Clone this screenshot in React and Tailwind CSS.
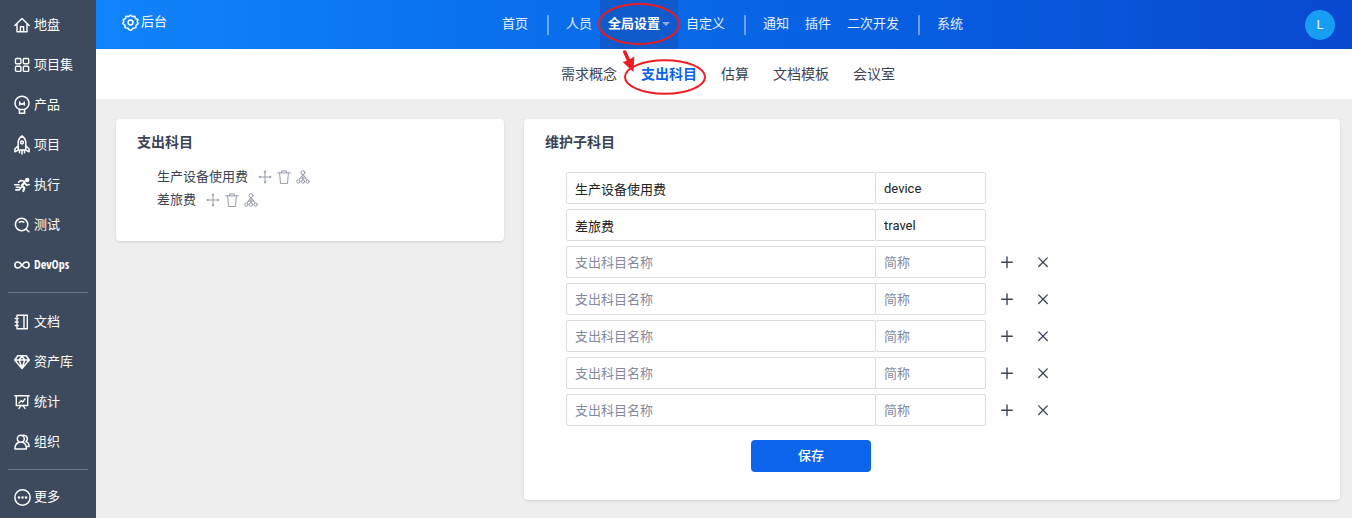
import React from "react";

const stroke = {
  fill: "none",
  stroke: "currentColor",
  strokeLinecap: "round",
  strokeLinejoin: "round",
};

function Glyph({ children, className = "size-4", width = 1.5, box = "0 0 16 16" }) {
  return (
    <svg
      viewBox={box}
      className={`shrink-0 ${className}`}
      strokeWidth={width}
      aria-hidden="true"
      {...stroke}
    >
      {children}
    </svg>
  );
}

const icons = {
  home: (
    <Glyph width={1.4}>
      <path d="M.8 8.400 8 1.600l7.200 6.800M3 7v7.700h10V7M6.400 14.500V9.800h3.200v4.700" />
    </Glyph>
  ),
  grid: (
    <Glyph width={1.4}>
      <rect x="1.500" y="1.500" width="5.400" height="5.200" rx="1" />
      <rect x="9.300" y="1.500" width="5.400" height="5.200" rx="1" />
      <rect x="1.500" y="9.200" width="5.400" height="5.200" rx="1" />
      <rect x="9.300" y="9.200" width="5.400" height="5.200" rx="1" />
    </Glyph>
  ),
  bulb: (
    <Glyph className="h-5 w-4" box="0 0 16 20">
      <path d="M5.400 14.400C2.700 13.200 1 11 1 8a7 6.800 0 0 1 14 0c0 3-1.700 5.200-4.400 6.400Z" />
      <path d="M5.400 14.400v3.800h5.200v-3.800M5.700 7v3M10.300 7v3M5.700 8.300l2.300 1 2.300-1" />
    </Glyph>
  ),
  rocket: (
    <Glyph className="h-5 w-4" box="0 0 16 20">
      <path d="M4.200 15V8C4.200 5 5.700 2.400 8 1c2.300 1.400 3.800 4 3.800 7v7ZM4.200 10.700.9 14v2.800l3.300-1.600M11.800 10.700l3.300 3.300v2.800l-3.300-1.600M5.500 16v1.700M8 16v3M10.500 16v1.700" />
      <circle cx="8" cy="7.500" r="1.400" />
    </Glyph>
  ),
  run: (
    <Glyph width={1.6}>
      <circle cx="13.200" cy="3" r="1.400" fill="currentColor" />
      <path d="M10.500 5.500 7.800 8.800l2.500 2-1 3.200" strokeWidth="2.200" />
      <path d="M10.800 4.300 6.800 3.500 4.600 5.200M11.400 6.700l1.300 1.600 2.500-.8M7 10.600 5 12.900H1.800M.8 7.800h4.300M2.300 10.300h3" />
    </Glyph>
  ),
  search: (
    <Glyph>
      <circle cx="7.600" cy="7.500" r="6.200" />
      <path d="m12.200 12.200 2.700 2.500M5.400 5.200q2.200-1.600 4.400 0" />
    </Glyph>
  ),
  loop: (
    <Glyph width={1.6}>
      <path d="M8 8C6.600 6.200 5.600 5 3.900 5a3 3 0 0 0 0 6C5.600 11 6.600 9.800 8 8s2.400-3 4.100-3a3 3 0 0 1 0 6C10.400 11 9.400 9.800 8 8Z" />
    </Glyph>
  ),
  notebook: (
    <Glyph width={1.4}>
      <path d="M3 1.200h10.300v13.600H3ZM10 1.200v13.600M1.200 4.500h3M1.200 8h3M1.200 11.500h3" />
    </Glyph>
  ),
  diamond: (
    <Glyph>
      <path d="M3.800 1.800h8.400L15.300 6 8 14.500.7 6ZM.9 6h14.200M5.200 6 8 14M10.800 6 8 14M5.200 6 8 2.200 10.800 6" />
    </Glyph>
  ),
  board: (
    <Glyph width={1.4}>
      <path d="M.8 1.800h14.400M2.300 2v9.500h11.400V2M5 14.400l2-2.700M11 14.400l-2-2.700M5 9l2.300-2.300 1.500 1.200L11 4.800" />
    </Glyph>
  ),
  people: (
    <Glyph>
      <circle cx="6.800" cy="4.700" r="3.500" />
      <path d="M.9 14.900c0-3.500 1.700-5.700 4-6.600M8.700 8.300c2.300.900 3.700 3.300 3.700 6.600H.9M9.400 1.200a3.500 3.500 0 0 1 2.500 6.300c2 .8 3.200 2.600 3.200 5h-2" />
    </Glyph>
  ),
  more: (
    <Glyph className="size-[17px]" width={1.4}>
      <circle cx="8" cy="8" r="7.200" />
      <g fill="currentColor" stroke="none">
        <circle cx="4.700" cy="8" r="1.200" />
        <circle cx="8" cy="8" r="1.200" />
        <circle cx="11.300" cy="8" r="1.200" />
      </g>
    </Glyph>
  ),
};

const gear = (
  <Glyph className="size-[17px]" width={1.4}>
    <path d="M8 .9 9.600 2.300 12.100 2.100 12.700 4.200 15 5.300 14.300 7.200 15.200 9.100 13.200 10.600 13 13 10.600 13.300 8.900 15.100 7.100 15.100 5.400 13.300 3 13 2.800 10.600.8 9.100 1.700 7.200 1 5.300 3.300 4.200 3.900 2.100 6.400 2.300Z" />
    <circle cx="8" cy="8" r="2.300" />
  </Glyph>
);

const sideGroups = [
  {
    className: "mx-2",
    items: [
      ["home", "地盘"],
      ["grid", "项目集"],
      ["bulb", "产品"],
      ["rocket", "项目"],
      ["run", "执行"],
      ["search", "测试"],
      ["loop", "DevOps"],
    ],
  },
  {
    className: "mx-2 mt-[7px] border-t border-[#6b7585] pt-[9px]",
    items: [
      ["notebook", "文档"],
      ["diamond", "资产库"],
      ["board", "统计"],
      ["people", "组织"],
    ],
  },
  {
    className: "mx-2 mt-[7px] border-t border-[#6b7585] pt-[7px]",
    items: [["more", "更多"]],
  },
];

function Sidebar() {
  return (
    <nav className="w-24 shrink-0 bg-[#3d4a5d] pt-[5px] text-white">
      {sideGroups.map(({ className, items }, i) => (
        <ul key={i} className={className}>
          {items.map(([icon, label]) => (
            <li key={label}>
              <a href="#" className="flex h-10 items-center gap-1 pl-[6px]">
                <span className="flex w-4 shrink-0 justify-center">{icons[icon]}</span>
                {label === "DevOps" ? (
                  <span className="font-['Liberation_Sans_Narrow','Open_Sans_Condensed','Roboto_Condensed',sans-serif] text-xs font-bold">
                    {label}
                  </span>
                ) : (
                  label
                )}
              </a>
            </li>
          ))}
        </ul>
      ))}
    </nav>
  );
}

const mainMenu = [["首页"], ["人员", "全局设置", "自定义"], ["通知", "插件", "二次开发"], ["系统"]];

function Header() {
  return (
    <header className="grid h-[49px] grid-cols-[1fr_auto_1fr] items-center bg-linear-to-r from-[#1183fb] to-[#0a48d1] pr-[17px] pl-[26px] text-white">
      <a href="#" className="flex h-11 items-center gap-0.5 self-start">
        {gear}
        <span>后台</span>
      </a>
      <nav className="flex h-full items-center pl-2">
        {mainMenu.map((group, i) => (
          <React.Fragment key={i}>
            {i > 0 && <span className="mr-[9px] ml-[11px] h-5 w-0.5 bg-white/40" />}
            {group.map((label) =>
              label === "全局设置" ? (
                <a
                  key={label}
                  href="#"
                  className="relative flex h-full items-center gap-0.5 bg-[#0f5bcb] px-2 pb-0.5 font-bold"
                >
                  {label}
                  <svg viewBox="0 0 8 4" className="h-1 w-2 fill-white/50" aria-hidden="true">
                    <path d="M0 0h8L4 4z" />
                  </svg>
                  <svg
                    viewBox="0 0 82 42"
                    className="absolute top-[3px] -left-0.5 z-10 h-[42px] w-[82px]"
                    aria-hidden="true"
                  >
                    <ellipse cx="41" cy="21" rx="40" ry="20" fill="none" stroke="#ec1c24" strokeWidth="2" />
                  </svg>
                </a>
              ) : (
                <a key={label} href="#" className="flex h-full items-center px-2 pb-0.5 text-white/90">
                  {label}
                </a>
              ),
            )}
          </React.Fragment>
        ))}
      </nav>
      <button
        type="button"
        className="flex size-[30px] items-center justify-center justify-self-end rounded-full bg-[#189df5] text-white/90"
      >
        L
      </button>
    </header>
  );
}

function SubMenu() {
  return (
    <nav className="flex h-[50px] items-center justify-center gap-6 bg-white pl-2 text-sm">
      {["需求概念", "支出科目", "估算", "文档模板", "会议室"].map((label) =>
        label === "支出科目" ? (
          <a key={label} href="#" className="relative font-bold text-[#0c64eb]">
            {label}
            <svg
              viewBox="0 0 82 46"
              className="absolute -top-[15px] -left-[17px] z-10 h-[46px] w-[82px] overflow-visible"
              aria-hidden="true"
            >
              <ellipse cx="41" cy="28" rx="40" ry="16.700" fill="none" stroke="#ec1c24" strokeWidth="2" />
              <path
                d="M-1.300 2.500Q.2.500 2.300 2L6 10.300 10.300 7.500 9.500 23-1.300 13 2.800 11.800Z"
                fill="#ec1c24"
              />
            </svg>
          </a>
        ) : (
          <a key={label} href="#">
            {label}
          </a>
        ),
      )}
    </nav>
  );
}

function IconButton({ label, children }) {
  return (
    <button type="button" aria-label={label} className="flex h-4 w-[19px] items-center justify-center">
      <Glyph className="size-3.5" width={1.1}>
        {children}
      </Glyph>
    </button>
  );
}

function SubjectTree() {
  return (
    <section className="rounded bg-white px-[21px] pt-[13px] pb-[30px] shadow-sm">
      <h2 className="text-sm font-bold">支出科目</h2>
      <ul className="mt-[13px] pl-5">
        {["生产设备使用费", "差旅费"].map((name) => (
          <li key={name} className="flex h-[23px] items-center">
            <span className="mr-[7px]">{name}</span>
            <span className="flex text-[#9297a5]">
              <IconButton label="移动">
                <path d="M8 2v12M2 8h12" />
                <path
                  d="m8 .3 1.800 2.500H6.200zM8 15.700l1.800-2.500H6.200zM.3 8l2.500-1.800v3.600zM15.700 8l-2.500-1.800v3.600z"
                  fill="currentColor"
                  stroke="none"
                />
              </IconButton>
              <IconButton label="删除">
                <path d="M.9 3.300h14.200M5.300 3V1h5.400v2M3 3.500l1 12h8l1-12" />
              </IconButton>
              <IconButton label="子类">
                <circle cx="8" cy="3" r="2.200" />
                <circle cx="2.700" cy="13.200" r="1.900" />
                <circle cx="8" cy="13.200" r="1.900" />
                <circle cx="13.300" cy="13.200" r="1.900" />
                <path d="M8 5.200v6M7.200 6 3.700 11M8.800 6l3.500 5M5 9.200h6" />
              </IconButton>
            </span>
          </li>
        ))}
      </ul>
    </section>
  );
}

const rows = [["生产设备使用费", "device"], ["差旅费", "travel"], [], [], [], [], []];

function SubjectForm() {
  return (
    <section className="rounded bg-white px-[21px] pt-[13px] pb-7 shadow-sm">
      <h2 className="text-sm font-bold">维护子科目</h2>
      <form className="mt-5 ml-[21px] max-w-[490px]" onSubmit={(e) => e.preventDefault()}>
        <div className="flex flex-col gap-[5px]">
          {rows.map(([name = "", code = ""], i) => (
            <div key={i} className="flex items-center">
              <input
                aria-label="支出科目名称"
                placeholder="支出科目名称"
                defaultValue={name}
                className="h-8 w-[310px] shrink-0 rounded-xs border border-[#dcdcdc] px-2 text-[#222] placeholder:text-[#838a9d]"
              />
              <input
                aria-label="简称"
                placeholder="简称"
                defaultValue={code}
                className="-ml-px h-8 w-[111px] shrink-0 rounded-xs border border-[#dcdcdc] px-2 text-[#222] placeholder:text-[#838a9d]"
              />
              {!name && (
                <div className="ml-[7px] flex gap-2">
                  <button type="button" aria-label="添加" className="flex size-7 items-center justify-center">
                    <Glyph width={1.4}>
                      <path d="M8 3v10.500M2.700 8.200h10.600" />
                    </Glyph>
                  </button>
                  <button type="button" aria-label="删除" className="flex size-7 items-center justify-center">
                    <Glyph width={1.3}>
                      <path d="m3.700 3.900 8.600 8.600M12.300 3.900l-8.600 8.600" />
                    </Glyph>
                  </button>
                </div>
              )}
            </div>
          ))}
        </div>
        <button
          type="submit"
          className="mx-auto mt-3.5 block h-8 w-[120px] rounded bg-[#0c64eb] font-medium text-white"
        >
          保存
        </button>
      </form>
    </section>
  );
}

export default function App() {
  return (
    <div className="flex min-h-screen bg-[#eee] font-[Roboto,'Noto_Sans_CJK_SC',sans-serif] text-[13px] leading-5 text-[#3c4353]">
      <Sidebar />
      <div className="min-w-0 flex-1">
        <Header />
        <SubMenu />
        <main className="grid grid-cols-[388fr_816fr] items-start gap-5 pt-5 pr-3 pb-4 pl-5">
          <SubjectTree />
          <SubjectForm />
        </main>
      </div>
    </div>
  );
}
